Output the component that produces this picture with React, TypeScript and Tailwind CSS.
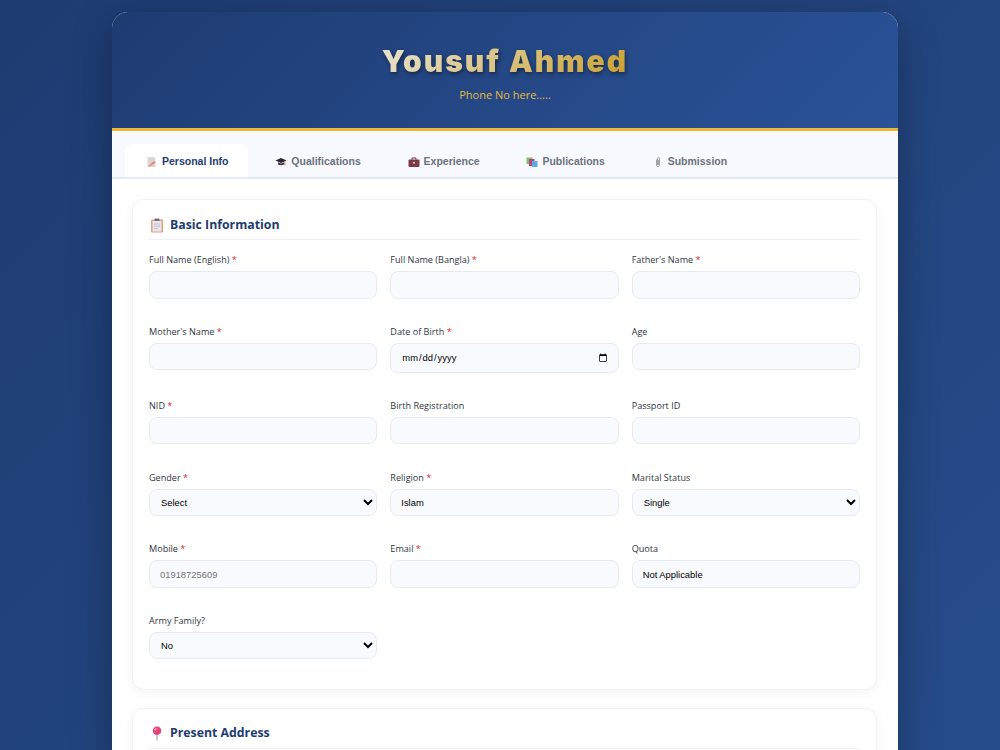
import React from 'react';

const inputClass =
  'block w-full h-[27.5px] rounded-lg border border-[#e6eaf3] bg-[#f8fafe] px-[10px] text-[9.4px] text-black font-["Liberation_Sans",sans-serif] outline-none placeholder:text-[#757575]';

type Field = {
  label: string;
  required?: boolean;
  kind?: 'input' | 'select' | 'date';
  value?: string;
  placeholder?: string;
};

const basicFields: Field[] = [
  { label: 'Full Name (English)', required: true },
  { label: 'Full Name (Bangla)', required: true },
  { label: "Father's Name", required: true },
  { label: "Mother's Name", required: true },
  { label: 'Date of Birth', required: true, kind: 'date' },
  { label: 'Age' },
  { label: 'NID', required: true },
  { label: 'Birth Registration' },
  { label: 'Passport ID' },
  { label: 'Gender', required: true, kind: 'select', value: 'Select' },
  { label: 'Religion', required: true, value: 'Islam' },
  { label: 'Marital Status', kind: 'select', value: 'Single' },
  { label: 'Mobile', required: true, placeholder: '01918725609' },
  { label: 'Email', required: true },
  { label: 'Quota', value: 'Not Applicable' },
  { label: 'Army Family?', kind: 'select', value: 'No' },
];

const MemoIcon = () => (
  <svg width="12" height="12" viewBox="0 0 12 12">
    <path d="M1.500 1h6l2 2v8h-8z" fill="#d8d4dc" />
    <path d="M3 9.500l5-4.500 1.500 1.500-5 3.500-2 .500z" fill="#ee8a4c" />
  </svg>
);

const CapIcon = () => (
  <svg width="12" height="12" viewBox="0 0 12 12">
    <path d="M0.500 4.500L6 2l5.500 2.500L6 7z" fill="#2a2438" />
    <path d="M3 6.200V8.500c1.500 1 4.500 1 6 0V6.200L6 7.500z" fill="#4a3a48" />
    <path d="M9.800 5.200v4" stroke="#d9773a" strokeWidth="1" />
  </svg>
);

const CaseIcon = () => (
  <svg width="12" height="12" viewBox="0 0 12 12">
    <path d="M4 3.500V2h4v1.500" fill="none" stroke="#6b3540" strokeWidth="1" />
    <rect x="0.500" y="3.500" width="11" height="7.500" rx="1" fill="#7c3a48" />
    <rect x="5" y="6" width="2" height="1.500" fill="#e8c8c0" />
  </svg>
);

const BooksIcon = () => (
  <svg width="12" height="12" viewBox="0 0 12 12">
    <rect x="0.500" y="1.500" width="6" height="6.500" fill="#7fc26b" />
    <rect x="3" y="3" width="5.500" height="7" fill="#b0487c" />
    <rect x="6" y="5" width="5.500" height="6" fill="#62a8e6" />
  </svg>
);

const ClipIcon = () => (
  <svg width="12" height="12" viewBox="0 0 12 12">
    <path
      d="M4.500 3.500v5.500c0 2 3 2 3 0V2.500c0-1.400-2-1.400-2 0V8.500c0 .7 1 .7 1 0V4"
      fill="none"
      stroke="#8a8a92"
      strokeWidth="0.800"
    />
  </svg>
);

const ClipboardIcon = () => (
  <svg width="14" height="15" viewBox="0 0 14 15">
    <rect x="1" y="1.500" width="12" height="13" rx="1" fill="#dca27c" />
    <rect x="2.500" y="3" width="9" height="10.500" fill="#e9e6ee" />
    <rect x="4.500" y="0.500" width="5" height="2.500" rx="0.500" fill="#77707c" />
    <path d="M4 6h6M4 8.200h6M4 10.400h4" stroke="#b9b6d0" strokeWidth="0.800" />
  </svg>
);

const PinIcon = () => (
  <svg width="14" height="15" viewBox="0 0 14 15">
    <path d="M7 8v6.500" stroke="#a8a8b0" strokeWidth="1.200" />
    <circle cx="7" cy="4.800" r="4.300" fill="#e8457e" />
    <circle cx="5.600" cy="3.400" r="1.100" fill="#f7a3c0" />
  </svg>
);

const tabs = [
  { name: 'Personal Info', icon: <MemoIcon />, active: true },
  { name: 'Qualifications', icon: <CapIcon /> },
  { name: 'Experience', icon: <CaseIcon /> },
  { name: 'Publications', icon: <BooksIcon /> },
  { name: 'Submission', icon: <ClipIcon /> },
];

const FormField = ({ field }: { field: Field }) => {
  return (
    <div className="mb-[26.200px]">
      <label className="mb-[5px] block h-[13px] text-[9.1px] leading-[13px] text-[#2f3640] font-['Open_Sans',sans-serif]">
        {field.label}
        {field.required && <span className="text-[#dc2626]"> *</span>}
      </label>
      {field.kind === 'select' ? (
        <select className={inputClass + ' pl-[7px] pr-[4px]'} defaultValue={field.value}>
          <option>{field.value}</option>
        </select>
      ) : field.kind === 'date' ? (
        <input type="date" className={inputClass + ' h-[30px] pr-[8px]'} />
      ) : (
        <input
          className={inputClass}
          defaultValue={field.value}
          placeholder={field.placeholder}
          readOnly
        />
      )}
    </div>
  );
};

const SectionTitle = ({ icon, title }: { icon: React.ReactNode; title: string }) => (
  <div className="mb-[13px] flex h-[25px] items-center gap-[6px] border-b border-[#eef0f6] pb-[4px]">
    <span className="flex w-[15px] justify-center">{icon}</span>
    <h2 className="text-[12.3px] font-bold text-[#1e3c72] font-['Open_Sans',sans-serif]">{title}</h2>
  </div>
);

export default function App() {
  return (
    <div className="h-[750px] overflow-hidden bg-[linear-gradient(135deg,#1e3c72,#264c8a)] pt-[12px] pl-[112px]">
      <div className="w-[786px] overflow-hidden rounded-t-2xl bg-white shadow-[0_10px_40px_rgba(0,0,0,0.3)]">
        <header className="flex h-[119px] flex-col items-center border-b-[3px] border-[#eab93a] bg-[linear-gradient(135deg,#1e3c72,#2a5298)] pt-[31px]">
          <h1 className="bg-[linear-gradient(135deg,#e8e3d3,#c9a02c)] bg-clip-text text-[30px] leading-[36px] font-black tracking-[2px] text-transparent drop-shadow-[1px_2px_2px_rgba(0,0,0,0.45)] font-['Inter',sans-serif]">
            Yousuf Ahmed
          </h1>
          <p className="mt-[8px] text-[11px] text-[#e5b93c] font-['Open_Sans',sans-serif]">Phone No here.....</p>
        </header>

        <nav className="flex h-[48px] items-end gap-[6.800px] border-b-2 border-[#e4e9f5] bg-[#f8f9fe] pl-[13px]">
          {tabs.map((tab) => (
            <div
              key={tab.name}
              className={
                'flex h-[33px] items-center gap-[4px] rounded-t-lg pt-[2px] pr-[19px] pl-[21px] text-[10.5px] font-bold font-["Liberation_Sans",sans-serif] ' +
                (tab.active ? 'bg-white text-[#1e3c72]' : 'text-[#6b7280]')
              }
            >
              {tab.icon}
              <span>{tab.name}</span>
            </div>
          ))}
        </nav>

        <main className="pt-[20px] pr-[21px] pl-[20px]">
          <section className="rounded-xl border border-[#f1f2f6] bg-white px-[16px] pt-[15px] pb-[3px] shadow-[0_2px_12px_rgba(0,0,0,0.05)]">
            <SectionTitle icon={<ClipboardIcon />} title="Basic Information" />
            <div className="grid grid-cols-3 gap-x-[13px]">
              {basicFields.map((field) => (
                <FormField key={field.label} field={field} />
              ))}
            </div>
          </section>

          <section className="mt-[18px] rounded-xl border border-[#f1f2f6] bg-white px-[16px] pt-[15px] pb-[20px] shadow-[0_2px_12px_rgba(0,0,0,0.05)]">
            <SectionTitle icon={<PinIcon />} title="Present Address" />
          </section>
        </main>
      </div>
    </div>
  );
}
